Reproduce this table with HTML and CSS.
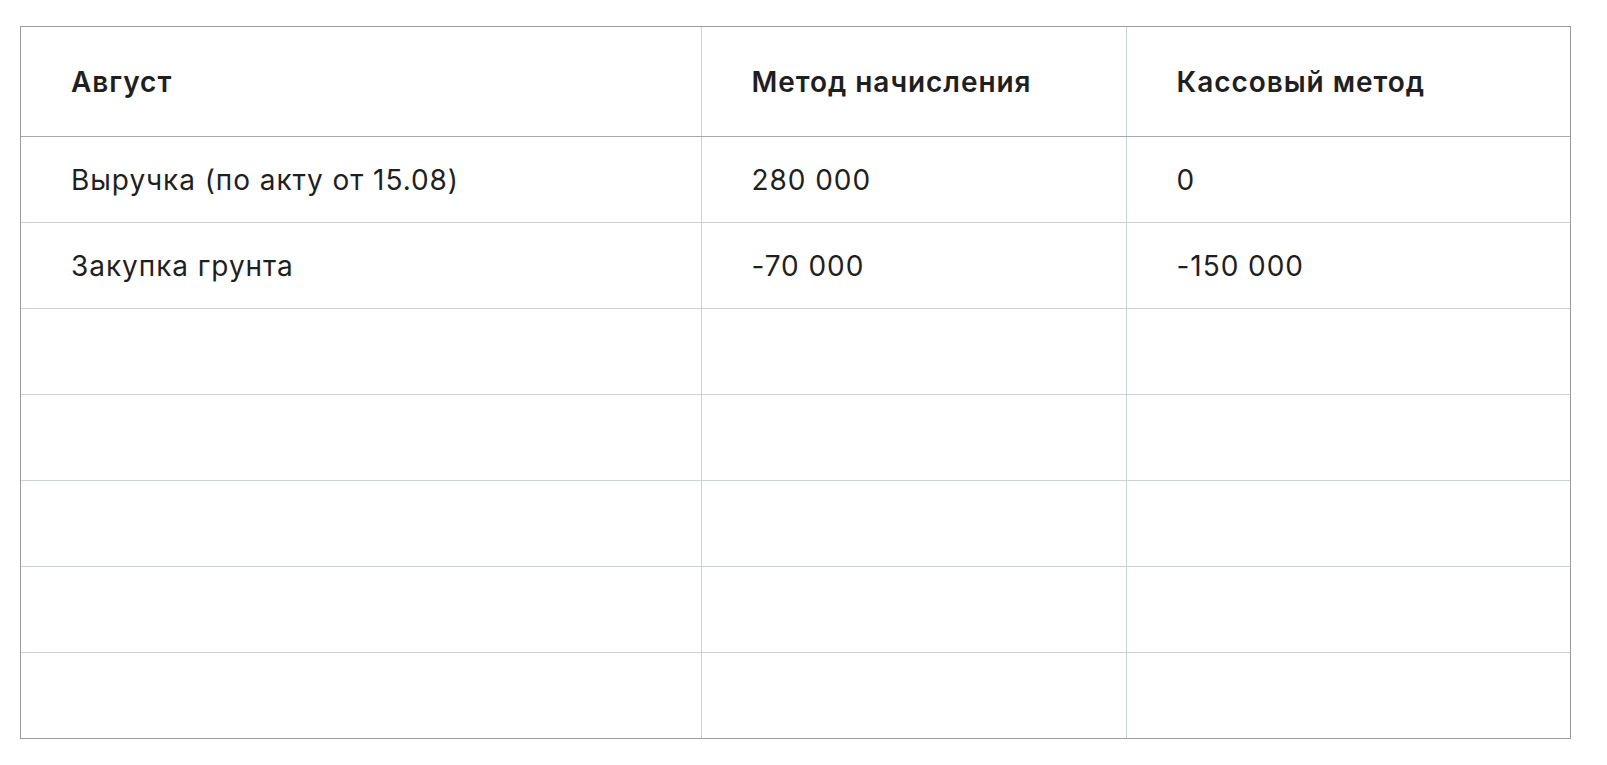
FILE: index.html
```html
<!DOCTYPE html>
<html lang="ru">
<head>
<meta charset="utf-8">
<link rel="stylesheet" href="styles.css">
</head>
<body>
<div class="wrap">
<table class="grid">
<colgroup><col class="c1"><col class="c2"><col class="c3"></colgroup>
<thead>
<tr><th>Август</th><th>Метод начисления</th><th>Кассовый метод</th></tr>
</thead>
<tbody>
<tr><td>Выручка (по акту от 15.08)</td><td>280 000</td><td>0</td></tr>
<tr><td>Закупка грунта</td><td>-70 000</td><td>-150 000</td></tr>
<tr><td></td><td></td><td></td></tr>
<tr><td></td><td></td><td></td></tr>
<tr><td></td><td></td><td></td></tr>
<tr><td></td><td></td><td></td></tr>
<tr><td></td><td></td><td></td></tr>
</tbody>
</table>
</div>
</body>
</html>
```
FILE: styles.css
```css
html, body {
  margin: 0;
  background: #ffffff;
}
body {
  padding: 26px 36px 0 20px;
  font-family: Inter, "Noto Sans", "Liberation Sans", sans-serif;
  color: #1f1f1f;
}
.wrap {
  width: 1549px;
  border: 1px solid #999c9e;
}
.grid {
  width: 100%;
  border-collapse: collapse;
  table-layout: fixed;
}
.c1 { width: 680px; }
.c2 { width: 425px; }
.grid th,
.grid td {
  border: 1px solid #cbd2d6;
  padding: 2px 0 0 50px;
  text-align: left;
  font-size: 28px;
  letter-spacing: 0.95px;
  line-height: 32px;
  height: 86px;
  box-sizing: border-box;
}
.grid th {
  font-weight: 600;
  height: 109px;
  border-top: none;
  border-bottom-color: #a3a8ab;
}
.grid th:first-child,
.grid td:first-child { border-left: none; }
.grid th:last-child,
.grid td:last-child { border-right: none; }
.grid tbody tr:last-child td { border-bottom: none; }
```
